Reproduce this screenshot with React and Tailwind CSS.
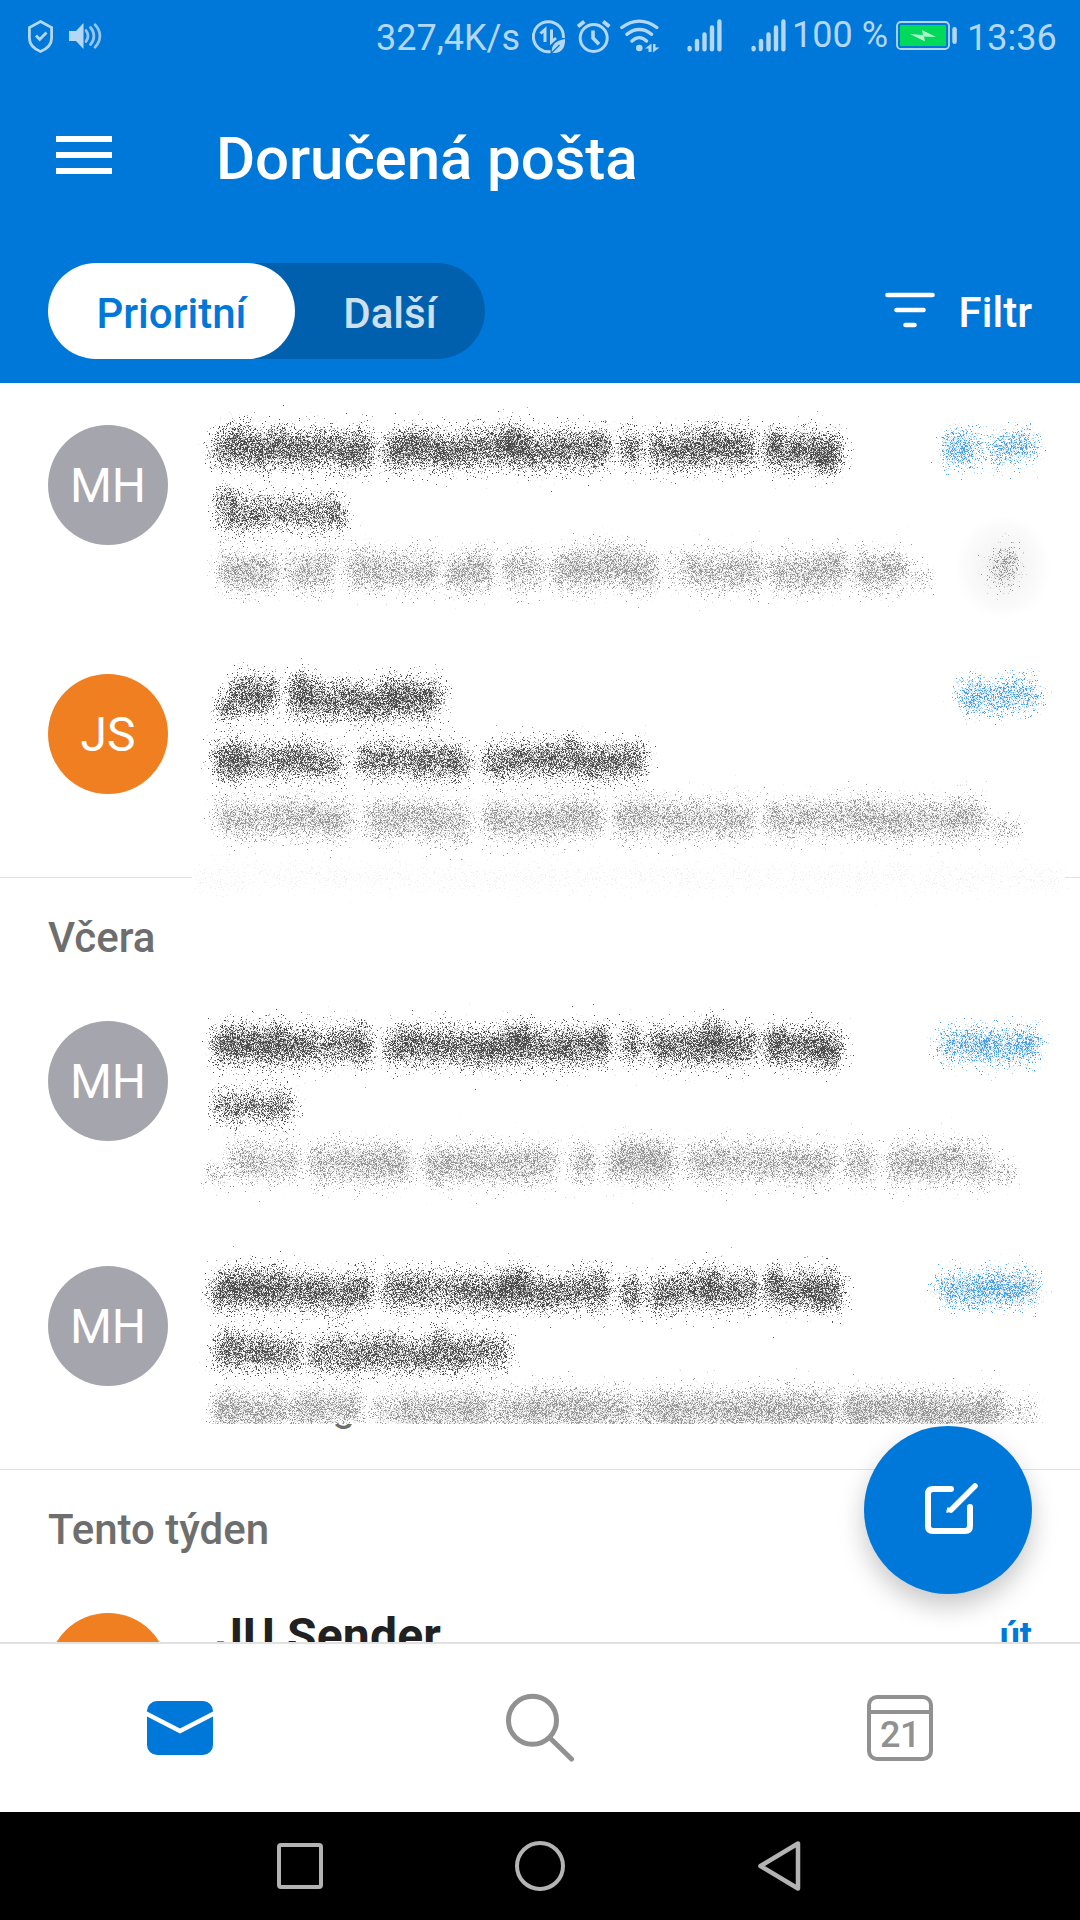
import React from 'react';

// small seeded generator so the smudges look the same on every render
const createRandom = (seed) => {
  let s = seed;
  return () => {
    s = (s + 0x6d2b79f5) | 0;
    let t = Math.imul(s ^ (s >>> 15), 1 | s);
    t = (t + Math.imul(t ^ (t >>> 7), 61 | t)) ^ t;
    return ((t ^ (t >>> 14)) >>> 0) / 4294967296;
  };
};

const TONES = {
  dark: { layers: ['#e2e2e2', '#a0a0a0', '#4c4c4c'], share: [1.15, 0.8, 0.78], spread: 10 },
  subject: { layers: ['#e2e2e2', '#a0a0a0', '#505050'], share: [1.05, 0.7, 0.68], spread: 9.5 },
  gray: { layers: ['#ededed', '#cfcfcf', '#969696'], share: [1.25, 0.7, 0.52], spread: 10.5 },
  blue: { layers: ['#dcecfb', '#a3cff4', '#4a9fe6'], share: [0.9, 0.4, 0.4], spread: 9.5 },
  faint: { layers: ['#fcfcfc', '#f8f8f8', '#eeeeee'], share: [0.4, 0.12, 0.07], spread: 9 },
};

// word: [from, to, density, vertical shift, spread factor]
const scatter = (words, y, tone, seed) => {
  const rnd = createRandom(seed);
  const gauss = () => Math.sqrt(-2 * Math.log(rnd() + 1e-9)) * Math.cos(2 * Math.PI * rnd());
  // uneven density and height along the line, as letters would leave
  const bumps = Array.from({ length: 90 }, () => [0.55 + rnd() * 0.45, (rnd() - 0.5) * 7]);
  const bump = (x, k) => {
    const p = Math.max(0, x - 180) / 11;
    const i = Math.floor(p) % 88;
    const f = p - Math.floor(p);
    return bumps[i][k] * (1 - f) + bumps[i + 1][k] * f;
  };
  return tone.share.map((share) => {
    let d = '';
    words.forEach(([from, to, density = 1, shift = 0, factor = 1]) => {
      const count = (to - from) * 23 * share * density * factor;
      for (let i = 0; i < count; i++) {
        const x = from + 4 + rnd() * (to - from - 8);
        if (rnd() > bump(x, 0)) continue;
        const px = Math.round(x + gauss() * 5.5) - 180;
        const py = Math.round(y + shift + bump(x, 1) + gauss() * tone.spread * factor);
        d += `M${px} ${py}h1v1h-1z`;
      }
    });
    return d;
  });
};

const SmudgeLine = ({ words, y, tone, seed }) => {
  const { layers } = TONES[tone];
  return scatter(words, y, TONES[tone], seed).map((d, i) => (
    <path key={i} d={d} fill={layers[i]} shapeRendering="crispEdges" />
  ));
};

const SENDER = [
  [210, 374], [382, 611], [620, 642, 0.7], [647, 758], [763, 843],
  [225, 290, 0.45, -7], [352, 368, 0.4, -4], [385, 425, 0.3, -9, 0.8], [496, 530, 0.6, -8, 0.9],
  [592, 606, 0.5, -5], [702, 722, 0.5, -10, 0.9], [766, 784, 0.5, -9, 0.7], [812, 838, 0.8, 9, 0.8],
];

const messages = {
  first: {
    initials: 'MH',
    color: 'bg-[#a5a5ad]',
    lines: [
      { tone: 'dark', y: 67, words: SENDER },
      { tone: 'subject', y: 130, words: [[215, 346, 0.9], [215, 240, 0.6, -14, 0.7]] },
      {
        tone: 'gray', y: 187,
        words: [[217, 282], [286, 335, 0.8], [322, 336, 0.5, -14, 0.7], [345, 440], [446, 494], [502, 543, 0.8], [549, 658], [570, 640, 0.4, -9], [663, 680, 0.3], [680, 764], [768, 850], [853, 906], [905, 934, 0.3, 8, 0.7]],
      },
      { tone: 'blue', y: 64, words: [[942, 984], [990, 1037, 1.1]] },
      { tone: 'gray', y: 184, words: [[990, 1018, 0.8]] },
    ],
    haze: true,
  },
  second: {
    initials: 'JS',
    color: 'bg-[#f07f21]',
    lines: [
      { tone: 'dark', y: 67, words: [[228, 278, 0.9, -5], [216, 235, 0.6, 9, 0.7], [287, 443], [290, 312, 0.5, -14, 0.8], [382, 402, 0.4, -11, 0.8]] },
      { tone: 'subject', y: 129, words: [[213, 343], [214, 245, 0.5, -8], [355, 471], [482, 648, 1.1], [564, 580, 0.4, -12, 0.8]] },
      { tone: 'gray', y: 186, words: [[214, 354], [363, 470], [450, 469, 0.4, 15, 0.6], [483, 602], [612, 755], [763, 986], [985, 1022, 0.25, 8, 0.7]] },
      { tone: 'blue', y: 64, words: [[956, 1039, 1.1]] },
    ],
  },
  third: {
    initials: 'MH',
    color: 'bg-[#a5a5ad]',
    lines: [
      { tone: 'dark', y: 67, words: SENDER },
      { tone: 'subject', y: 127, words: [[213, 295, 0.9]] },
      {
        tone: 'gray', y: 184,
        words: [[208, 225, 0.4, 9, 0.7], [225, 302, 0.7, -2], [307, 412], [420, 559], [568, 595, 0.8], [605, 676], [616, 660, 0.4, -12, 0.8], [684, 836], [843, 877, 0.8], [886, 991, 1.1], [990, 1018, 0.3, 8, 0.7]],
      },
      { tone: 'blue', y: 66, words: [[937, 1039, 1.2]] },
    ],
  },
  fourth: {
    initials: 'MH',
    color: 'bg-[#a5a5ad]',
    lines: [
      { tone: 'dark', y: 67, words: SENDER },
      { tone: 'subject', y: 129, words: [[212, 302, 0.95], [306, 511], [216, 240, 0.4, -12, 0.8], [328, 345, 0.4, -14, 0.8], [380, 400, 0.4, -12, 0.8], [430, 448, 0.4, -14, 0.8]] },
      { tone: 'gray', y: 186, words: [[212, 290, 1.2], [290, 362], [370, 395, 0.5], [393, 495, 1.2], [495, 634, 1.3], [636, 840, 1.3], [841, 1005, 1.5], [1004, 1038, 0.3, 7]] },
      { tone: 'blue', y: 65, words: [[935, 1039, 1.2]] },
    ],
    clipped: true,
  },
};

const Avatar = ({ initials, color }) => (
  <div className={`ml-12 mt-[42px] flex h-[120px] w-[120px] shrink-0 items-center justify-center rounded-full pt-0.5 text-5xl text-white ${color}`}>
    {initials}
  </div>
);

const MessageRow = ({ message, className, seed }) => (
  <div className={`relative flex ${className}`}>
    <Avatar initials={message.initials} color={message.color} />
    <svg
      width="900"
      height={message.clipped ? 200 : 245}
      viewBox={`0 0 900 ${message.clipped ? 200 : 245}`}
      className="ml-3 shrink-0"
    >
      {message.haze && (
        <>
          <defs>
            <radialGradient id="haze">
              <stop offset="0" stopColor="#eeeeee" />
              <stop offset="0.5" stopColor="#f7f7f7" />
              <stop offset="0.8" stopColor="#fbfbfb" />
              <stop offset="1" stopColor="#ffffff" />
            </radialGradient>
          </defs>
          <rect x="775" y="132" width="96" height="104" rx="24" fill="url(#haze)" />
        </>
      )}
      {message.lines.map((line, i) => (
        <SmudgeLine key={i} {...line} seed={seed * 100 + i} />
      ))}
    </svg>
    {message.clipped && (
      <div className="absolute left-[332px] top-[200px] h-3 w-8 overflow-hidden text-[42px] leading-none text-[#6e6e6e]">
        <span className="-mt-[39px] block">g</span>
      </div>
    )}
  </div>
);

const SectionTitle = ({ children }) => (
  <h2 className="h-[101px] pl-12 pt-[35px] text-[42px] font-medium leading-[49px] text-[#6e6e6e]">{children}</h2>
);

const Signal = ({ className }) => (
  <svg width="36" height="34" viewBox="0 0 36 34" className={`shrink-0 ${className}`} stroke="#b3d7f4" strokeWidth="4.4" strokeLinecap="round">
    <path d="M2.600 29v1.200M10 22v8.200M17.500 15.500v14.700M25 8.500v21.700M32.400 2.500v27.700" />
  </svg>
);

const StatusBar = () => (
  <div className="flex h-[72px] items-start text-[36px] leading-[42px] text-[#b3d7f4]">
    <svg width="26" height="34" viewBox="0 0 26 34" className="ml-7 mt-5 shrink-0" fill="none" stroke="#b3d7f4" strokeWidth="2.8">
      <path d="M12.500 1.600 23.600 7.500V18c0 6.500-5 11-11.100 13.500C6.400 29 1.400 24.500 1.400 18V7.500z" />
      <path d="m8 15.500 3.700 4L18.500 12.500" />
    </svg>
    <svg width="34" height="28" viewBox="0 0 34 28" className="ml-[15px] mt-[22px] shrink-0">
      <path d="M0 9h7l7.500-8v26L7 19H0z" fill="#b3d7f4" />
      <g fill="none" stroke="#93c5ee" strokeWidth="2.8" strokeLinecap="round">
        <path d="M17 8.500c2.500 3.500 2.500 7.500 0 11" />
        <path d="M21.500 5.500c4.500 5 4.500 12 0 17" />
        <path d="M26 2.800c6.500 6.500 6.500 15.900 0 22.400" />
      </g>
    </svg>
    <span className="ml-[273px] mt-[17px] w-[156px] whitespace-nowrap">327,4K/s</span>
    <svg width="34" height="34" viewBox="0 0 34 34" className="mt-5 shrink-0">
      <path d="M18.500 31.500A15 15 0 1 1 31.300 18" fill="none" stroke="#b3d7f4" strokeWidth="3" />
      <path d="M8.500 13.500 13 9.500v12.500M19.500 9.500v12.500l4.500-4" fill="none" stroke="#b3d7f4" strokeWidth="3" />
      <path d="M20 33c-1.500-8 4-12.500 13-14 .5 8-3 15-13 14z" fill="#b3d7f4" />
      <path d="m19.500 33 8-8" stroke="#0078d9" strokeWidth="1.200" />
    </svg>
    <svg width="34" height="34" viewBox="0 0 34 34" className="ml-[11px] mt-5 shrink-0" fill="none" stroke="#b3d7f4" strokeWidth="3">
      <circle cx="16.700" cy="18" r="13.500" />
      <path d="M16 10.500v7.500l6 6.300" strokeWidth="3.600" />
      <path d="m1 6.500 6.300-5M32.400 6.500l-6.300-5" strokeWidth="3.800" />
    </svg>
    <svg width="40" height="34" viewBox="0 0 40 34" className="ml-[9px] mt-[19px] shrink-0" fill="none" stroke="#b3d7f4" strokeWidth="3.400" strokeLinecap="round">
      <path d="M1.800 8.500c11-8.500 24-8.500 35 0M7 15.300c7.500-6.500 17-6.500 24.500 0M12 22c4.500-4.500 10-4.500 14.500 0" />
      <circle cx="19.300" cy="29" r="3.300" fill="#b3d7f4" stroke="none" />
      <path d="M25 29.500 31.500 24.500v8.500h-3v-3.500zM33 25h2.500v3.500h4L33 33.500z" fill="#b3d7f4" stroke="none" />
    </svg>
    <Signal className="ml-[27px] mt-[19px]" />
    <Signal className="ml-[28px] mt-[19px]" />
    <span className="ml-[5px] mt-[14px] w-[104px] whitespace-nowrap">100 %</span>
    <svg width="62" height="30" viewBox="0 0 62 30" className="mt-[21px] shrink-0">
      <rect x="1" y="1" width="52" height="27" rx="4" fill="none" stroke="#b3d7f4" strokeWidth="1.800" />
      <rect x="4" y="4" width="46" height="21" rx="1" fill="#00d95a" />
      <path d="m14 13 13 1-1-5 14 7-12-.5 1 5z" fill="#b3f4ce" />
      <rect x="56.300" y="6" width="4.500" height="17" rx="2.200" fill="#b3d7f4" />
    </svg>
    <span className="ml-[9px] mt-[17px] whitespace-nowrap">13:36</span>
  </div>
);

const Header = () => (
  <header className="h-[383px] shrink-0 bg-[#0078d9]">
    <StatusBar />
    <div className="flex h-[168px] items-start">
      <div className="ml-14 mt-16 flex w-14 flex-col gap-2.5">
        <span className="h-1.5 bg-white" />
        <span className="h-1.5 bg-white" />
        <span className="h-1.5 bg-white" />
      </div>
      <h1 className="ml-[104px] mt-[52px] text-[60px] font-medium leading-[70px] tracking-[-0.1px] text-white">Doručená pošta</h1>
    </div>
    <div className="mt-[23px] flex items-center justify-between px-12">
      <div className="flex h-24 w-[437px] rounded-full bg-[#0060ad] text-[42px] font-medium">
        <button className="h-24 w-[247px] rounded-full bg-white pt-1 text-[#0078d9]">Prioritní</button>
        <button className="flex-1 pt-1 text-[#cce0f0]">Další</button>
      </div>
      <button className="flex items-center gap-[24px] text-[42px] font-medium text-white">
        <svg width="50" height="36" viewBox="0 0 50 36" stroke="#fff" strokeWidth="4.600" strokeLinecap="round" className="-mt-0.5">
          <path d="M2.500 3h45M11.500 18h27M20.500 33h9" />
        </svg>
        <span className="pt-[3px]">Filtr</span>
      </button>
    </div>
  </header>
);

const ComposeButton = () => (
  <button className="absolute bottom-[48px] right-12 flex h-[168px] w-[168px] items-center justify-center rounded-full bg-[#0078d9] shadow-[0_12px_26px_rgba(0,0,0,0.22)]">
    <svg width="54" height="54" viewBox="0 0 54 54" fill="none" stroke="#fff" strokeWidth="6" strokeLinecap="round" strokeLinejoin="round" className="-mt-[5px] ml-[5px]">
      <path d="M27 8H9Q4 8 4 13v32q0 5 5 5h32q5 0 5-5V26" />
      <path d="M51 5 27 29" strokeWidth="5.500" />
      <path d="m23 31 1-4 3 3z" fill="#fff" strokeWidth="1.500" />
    </svg>
  </button>
);

const TabBar = () => (
  <nav className="grid h-[170px] shrink-0 grid-cols-3 border-t-2 border-[#e1e1e1] bg-white">
    <div className="flex justify-center pt-[57px]">
      <svg width="66" height="54" viewBox="0 0 66 54">
        <rect width="66" height="54" rx="10" fill="#0078d9" />
        <path d="M-1 12.500 33 30l34-17.500" fill="none" stroke="#fff" strokeWidth="4.400" />
      </svg>
    </div>
    <div className="flex justify-center pt-[49px]">
      <svg width="70" height="70" viewBox="0 0 70 70" fill="none" stroke="#919191">
        <circle cx="27.500" cy="27.300" r="24" strokeWidth="5" />
        <path d="m45.500 45.500 21 20.500" strokeWidth="5" strokeLinecap="round" />
      </svg>
    </div>
    <div className="flex justify-center pt-[51px]">
      <div className="h-[66px] w-[66px] rounded-[10px] border-4 border-[#919191] text-center text-[36px] font-medium leading-[42px] tracking-[-0.5px] text-[#919191]">
        <div className="h-[15px] border-b-4 border-[#919191]" />
        <span className="block">21</span>
      </div>
    </div>
  </nav>
);

const SystemBar = () => (
  <div className="flex h-[108px] shrink-0 items-center justify-center bg-black">
    <div className="flex w-60 justify-center">
      <div className="h-[46px] w-[46px] rounded-[4px] border-[4.5px] border-[#b3b3b3]" />
    </div>
    <div className="flex w-60 justify-center">
      <div className="h-[50px] w-[50px] rounded-full border-[4.5px] border-[#b3b3b3]" />
    </div>
    <div className="flex w-60 justify-center">
      <svg width="44" height="50" viewBox="0 0 44 50" fill="none" stroke="#b3b3b3" strokeWidth="4.500" strokeLinejoin="round">
        <path d="M40 2.500v45L2.500 25z" />
      </svg>
    </div>
  </div>
);

const Divider = () => <div className="h-px bg-[#e1e1e1]" />;

export default function App() {
  return (
    <div className="flex h-[1920px] w-[1080px] flex-col overflow-hidden bg-white font-['Roboto',sans-serif]">
      <Header />
      <div className="relative h-[1259px] shrink-0">
        <main className="h-full overflow-hidden">
          <MessageRow message={messages.first} className="h-[249px]" seed={1} />
          <MessageRow message={messages.second} className="h-[245px]" seed={2} />
          <div className="relative h-px">
            <Divider />
            {/* smudge spilling over the divider */}
            <svg width="900" height="60" viewBox="0 0 900 60" className="absolute -top-[30px] left-[180px]">
              <rect x="12" y="28" width="873" height="4" fill="#fff" />
              <SmudgeLine words={[[192, 1065]]} y={30} tone="faint" seed={77} />
            </svg>
          </div>
          <SectionTitle>Včera</SectionTitle>
          <MessageRow message={messages.third} className="h-[245px]" seed={3} />
          <MessageRow message={messages.fourth} className="h-[245px]" seed={4} />
          <Divider />
          <SectionTitle>Tento týden</SectionTitle>
          <div className="flex pr-12">
            <Avatar initials="" color="bg-[#f07f21]" />
            <div className="ml-12 mt-[37px] flex-1 text-5xl font-bold leading-[56px] tracking-[0.2px] text-[#212121]">JU Sender</div>
            <div className="mt-[44px] text-[36px] font-bold leading-[42px] text-[#0078d9]">út</div>
          </div>
        </main>
        <ComposeButton />
      </div>
      <TabBar />
      <SystemBar />
    </div>
  );
}
